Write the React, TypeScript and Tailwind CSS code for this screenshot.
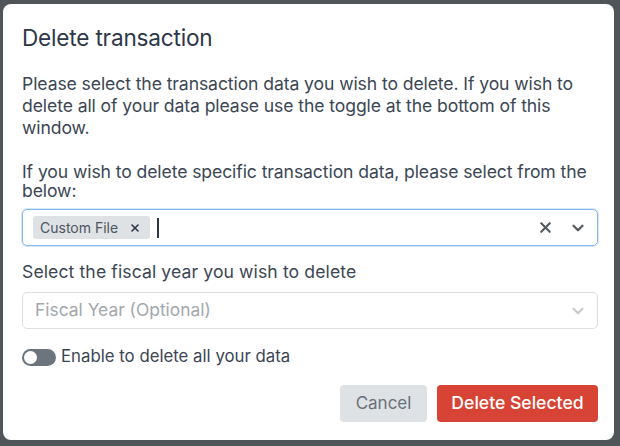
import { ChevronDown, X } from "lucide-react";

const font = { fontFamily: "Inter, 'Noto Sans', sans-serif" };

export default function App() {
  return (
    <div className="w-[620px] h-[446px] bg-[#50555a] pt-[4px] pl-[3px]" style={font}>
      <div className="w-[611px] h-[436px] bg-white rounded-[8px] pl-[19px] pr-[16px] pt-[20px] flex flex-col">
        <h2 className="text-[22.6px] leading-[28px] text-[#2d3748] tracking-[-0.2px] h-[28px] flex items-center">
          Delete transaction
        </h2>

        <p className="mt-[21px] text-[17.6px] leading-[22px] text-[#3b4654] tracking-[-0.1px]">
          Please select the transaction data you wish to delete. If you wish to
          <br />
          delete all of your data please use the toggle at the bottom of this
          <br />
          window.
        </p>

        <p className="mt-[23px] text-[17.6px] leading-[19px] text-[#3b4654] tracking-[-0.1px]">
          If you wish to delete specific transaction data, please select from the
          <br />
          below:
        </p>

        <div className="mt-[9px] h-[37px] border border-[#86b7ee] rounded-[5px] shadow-[0_0_0_1px_rgba(134,183,238,0.35)] flex items-center pl-[10px] pr-[10px]">
          <span className="h-[23px] bg-[#dfe2e5] rounded-[3px] flex items-center pl-[7px] pr-[9px] text-[14px] text-[#4a5561]">
            Custom File
            <X className="w-[12px] h-[12px] ml-[11px] text-[#2d3748]" strokeWidth={3.2} />
          </span>
          <span className="ml-[7px] w-[2px] h-[20px] bg-[#2d3748]" />
          <span className="flex-1" />
          <X className="w-[17px] h-[17px] text-[#555a5e]" strokeWidth={3} />
          <ChevronDown className="w-[18px] h-[18px] ml-[15px] text-[#555a5e]" strokeWidth={3} />
        </div>

        <p className="mt-[16px] text-[17.6px] leading-[20px] text-[#3b4654] tracking-[0.1px]">
          Select the fiscal year you wish to delete
        </p>

        <div className="mt-[10px] h-[37px] border border-[#dcdfe2] rounded-[5px] flex items-center pl-[12px] pr-[10px]">
          <span className="flex-1 text-[17.4px] text-[#a3a8ad]">Fiscal Year (Optional)</span>
          <ChevronDown className="w-[18px] h-[18px] text-[#c9cccf]" strokeWidth={3} />
        </div>

        <div className="mt-[19px] h-[18px] flex items-center">
          <span className="w-[34px] h-[17px] rounded-full bg-[#6c757d] flex items-center pl-[2px]">
            <span className="w-[13px] h-[13px] rounded-full bg-white" />
          </span>
          <span className="ml-[5px] text-[16.8px] text-[#3b4654]">Enable to delete all your data</span>
        </div>

        <div className="mt-[19px] flex justify-end gap-[10px]">
          <button className="w-[87px] h-[37px] rounded-[4px] bg-[#dfe2e5] text-[17px] text-[#68717a]">
            Cancel
          </button>
          <button className="w-[161px] h-[37px] rounded-[4px] bg-[#d74436] text-[17.6px] text-white font-medium">
            Delete Selected
          </button>
        </div>
      </div>
    </div>
  );
}
